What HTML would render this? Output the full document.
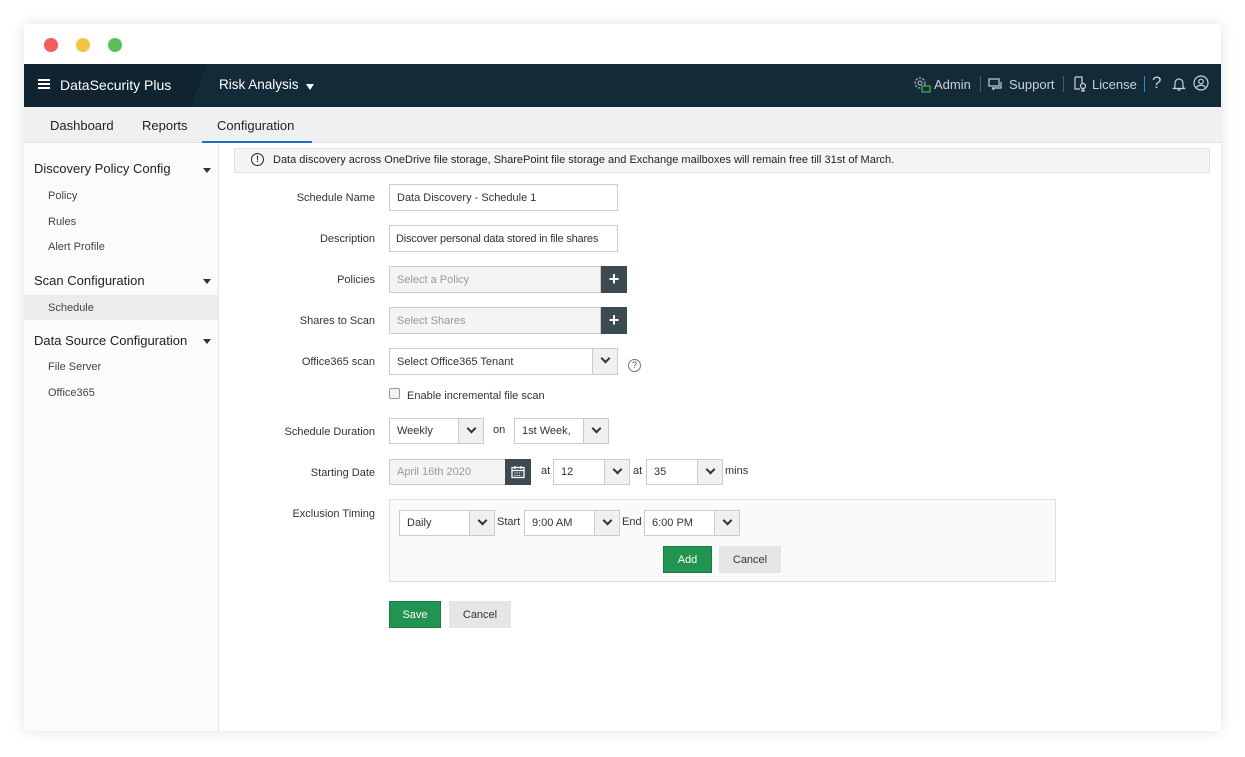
<!DOCTYPE html>
<html><head><style>
*{box-sizing:border-box;margin:0;padding:0}
body{width:1245px;height:757px;background:#fff;font-family:"Liberation Sans",sans-serif;position:relative;overflow:hidden;color:#333}
.a{position:absolute;white-space:nowrap}
.win{left:24px;top:24px;width:1197px;height:707px;background:#fff;box-shadow:0 0 14px rgba(0,0,0,.12);border-radius:3px;overflow:hidden}
.dot{width:14px;height:14px;border-radius:50%;top:38px}
.lbl{font-size:11px;color:#333;text-align:right;width:170px;left:205px}
.in{border:1px solid #ccc;background:#fff;font-size:11px;padding-left:7px;display:flex;align-items:center;color:#333;overflow:hidden}
.ph{background:#f4f4f4;color:#999}
.dd{position:absolute;right:0;top:0;bottom:0;width:25px;background:#f0f0f0;border-left:1px solid #ccc}
.dd:after{content:"";position:absolute;left:9px;top:6px;width:5px;height:5px;border-right:2px solid #333;border-bottom:2px solid #333;transform:rotate(45deg)}
.plus{background:#3c4a52;color:#fff;font-size:18px;font-weight:bold;display:flex;align-items:center;justify-content:center}
.sb{font-size:13.5px;color:#222;left:34px}
.sbi{font-size:11px;color:#444;left:48px}
.car{width:0;height:0;border-left:4px solid transparent;border-right:4px solid transparent;border-top:5px solid #333;left:203px}
.btn{font-size:11px;display:flex;align-items:center;justify-content:center}
.sm{font-size:11px;color:#333}
</style></head><body>
<div class="a win"></div>
<div class="a dot" style="left:44px;background:#f45b5b"></div>
<div class="a dot" style="left:76px;background:#f5c242"></div>
<div class="a dot" style="left:108px;background:#5ac15a"></div>
<!-- header -->
<div class="a" style="left:24px;top:64px;width:1197px;height:43px;background:#0f2330"></div>
<div class="a" style="left:190px;top:64px;width:1031px;height:43px;background:#132a38;clip-path:polygon(17px 0,100% 0,100% 100%,0 100%)"></div>
<div class="a" style="left:38px;top:79px;width:12px;height:2px;background:#fff;box-shadow:0 4px 0 #fff,0 8px 0 #fff"></div>
<div class="a" style="left:60px;top:77px;font-size:14px;color:#fff">DataSecurity Plus</div>
<div class="a" style="left:219px;top:77px;font-size:13.5px;color:#fff">Risk Analysis</div>
<div class="a" style="left:306px;top:84px;border-left:4.5px solid transparent;border-right:4.5px solid transparent;border-top:6px solid #fff"></div>
<svg class="a" style="left:912px;top:75px" width="20" height="20" viewBox="0 0 20 20"><circle cx="8" cy="8" r="5" fill="none" stroke="#9aa5ad" stroke-width="1.3" stroke-dasharray="2.5 1.2"/><circle cx="8" cy="8" r="2" fill="none" stroke="#9aa5ad" stroke-width="1.2"/><rect x="10" y="11" width="8" height="6" fill="#1a2e3a" stroke="#3cb04a" stroke-width="1.3"/></svg>
<div class="a" style="left:934px;top:77px;font-size:13px;color:#c9d1d6">Admin</div>
<div class="a" style="left:980px;top:76px;width:1px;height:16px;background:#4a5a66"></div>
<svg class="a" style="left:988px;top:78px" width="16" height="14" viewBox="0 0 16 14"><rect x="1" y="1" width="10" height="7" fill="none" stroke="#c9d1d6" stroke-width="1.2"/><path d="M4 10h9V4M6 12l-2-2" fill="none" stroke="#c9d1d6" stroke-width="1.2"/></svg>
<div class="a" style="left:1009px;top:77px;font-size:13px;color:#c9d1d6">Support</div>
<div class="a" style="left:1063px;top:76px;width:1px;height:16px;background:#4a5a66"></div>
<svg class="a" style="left:1073px;top:76px" width="14" height="16" viewBox="0 0 14 16"><path d="M2 1h7v7M2 1v12h5" fill="none" stroke="#c9d1d6" stroke-width="1.2"/><circle cx="10" cy="10" r="2.5" fill="none" stroke="#c9d1d6" stroke-width="1.2"/><path d="M9 12.5v3l1-1 1 1v-3" fill="none" stroke="#c9d1d6" stroke-width="1"/></svg>
<div class="a" style="left:1092px;top:77px;font-size:13px;color:#c9d1d6">License</div>
<div class="a" style="left:1144px;top:76px;width:1px;height:16px;background:#2f8ac4"></div>
<div class="a" style="left:1152px;top:73px;font-size:17px;color:#c9d1d6">?</div>
<svg class="a" style="left:1172px;top:76px" width="14" height="16" viewBox="0 0 14 16"><path d="M3 11V7a4 4 0 018 0v4l1.5 1.5h-11z M5.5 14h3" fill="none" stroke="#c9d1d6" stroke-width="1.2"/></svg>
<svg class="a" style="left:1193px;top:75px" width="16" height="16" viewBox="0 0 16 16"><circle cx="8" cy="8" r="7" fill="none" stroke="#c9d1d6" stroke-width="1.2"/><circle cx="8" cy="6.5" r="2.3" fill="none" stroke="#c9d1d6" stroke-width="1.2"/><path d="M3.5 12.5c2-3 7-3 9 0" fill="none" stroke="#c9d1d6" stroke-width="1.2"/></svg>
<!-- tabs -->
<div class="a" style="left:24px;top:107px;width:1197px;height:36px;background:#eef0f2;border-bottom:1px solid #e2e4e6"></div>
<div class="a" style="left:50px;top:118px;font-size:13px;color:#222">Dashboard</div>
<div class="a" style="left:142px;top:118px;font-size:13px;color:#222">Reports</div>
<div class="a" style="left:217px;top:118px;font-size:13px;color:#222">Configuration</div>
<div class="a" style="left:202px;top:141px;width:110px;height:2px;background:#1e6fc4"></div>
<!-- sidebar -->
<div class="a" style="left:24px;top:144px;width:195px;height:587px;background:#fbfbfb;border-right:1px solid #e6e6e6"></div>
<div class="a sb" style="top:161px;font-size:13px">Discovery Policy Config</div><div class="a car" style="top:168px"></div>
<div class="a sbi" style="top:190px">Policy</div>
<div class="a sbi" style="top:216px">Rules</div>
<div class="a sbi" style="top:241px">Alert Profile</div>
<div class="a sb" style="top:273px;font-size:13px">Scan Configuration</div><div class="a car" style="top:279px"></div>
<div class="a" style="left:24px;top:295px;width:194px;height:25px;background:#ececec"></div>
<div class="a sbi" style="top:302px">Schedule</div>
<div class="a sb" style="top:333px;font-size:13px">Data Source Configuration</div><div class="a car" style="top:339px"></div>
<div class="a sbi" style="top:361px">File Server</div>
<div class="a sbi" style="top:387px">Office365</div>
<!-- banner -->
<div class="a" style="left:234px;top:148px;width:976px;height:25px;background:#f3f5f6;border:1px solid #e0e3e5"></div>
<div class="a" style="left:251px;top:153px;width:13px;height:13px;border:1.3px solid #222;border-radius:50%;font-size:9px;font-weight:bold;text-align:center;line-height:11px">!</div>
<div class="a" style="left:273px;top:154px;font-size:11px;color:#222">Data discovery across OneDrive file storage, SharePoint file storage and Exchange mailboxes will remain free till 31st of March.</div>
<!-- form -->
<div class="a lbl" style="top:192px">Schedule Name</div>
<div class="a in" style="left:389px;top:184px;width:229px;height:27px">Data Discovery - Schedule 1</div>
<div class="a lbl" style="top:233px">Description</div>
<div class="a in" style="left:389px;top:225px;width:229px;height:27px;letter-spacing:-0.2px;padding-left:6px">Discover personal data stored in file shares</div>
<div class="a lbl" style="top:274px">Policies</div>
<div class="a in ph" style="left:389px;top:266px;width:212px;height:27px">Select a Policy</div>
<div class="a plus" style="left:601px;top:266px;width:26px;height:27px">+</div>
<div class="a lbl" style="top:315px">Shares to Scan</div>
<div class="a in ph" style="left:389px;top:307px;width:212px;height:27px">Select Shares</div>
<div class="a plus" style="left:601px;top:307px;width:26px;height:27px">+</div>
<div class="a lbl" style="top:356px">Office365 scan</div>
<div class="a in" style="left:389px;top:348px;width:229px;height:27px">Select Office365 Tenant<span class="dd"></span></div>
<div class="a" style="left:628px;top:359px;width:13px;height:13px;border:1px solid #777;border-radius:50%;font-size:9px;color:#555;text-align:center;line-height:11px">?</div>
<div class="a" style="left:389px;top:388px;width:11px;height:11px;border:1px solid #999;border-radius:2px;background:#f4f4f4"></div>
<div class="a sm" style="left:407px;top:390px">Enable incremental file scan</div>
<div class="a lbl" style="top:426px">Schedule Duration</div>
<div class="a in" style="left:389px;top:418px;width:95px;height:26px">Weekly<span class="dd"></span></div>
<div class="a sm" style="left:493px;top:424px">on</div>
<div class="a in" style="left:514px;top:418px;width:95px;height:26px">1st Week,<span class="dd"></span></div>
<div class="a lbl" style="top:467px">Starting Date</div>
<div class="a in ph" style="left:389px;top:459px;width:117px;height:26px">April 16th 2020</div>
<div class="a" style="left:505px;top:459px;width:26px;height:26px;background:#3c4a52"></div>
<svg class="a" style="left:511px;top:465px" width="14" height="14" viewBox="0 0 14 14"><rect x="1" y="2.5" width="12" height="10" fill="none" stroke="#fff" stroke-width="1.3"/><path d="M1 5.5h12M4 1v3M10 1v3" stroke="#fff" stroke-width="1.3"/><path d="M3.5 8h7M3.5 10.5h7" stroke="#fff" stroke-width="1" stroke-dasharray="1.2 1"/></svg>
<div class="a sm" style="left:541px;top:465px">at</div>
<div class="a in" style="left:553px;top:459px;width:77px;height:26px">12<span class="dd"></span></div>
<div class="a sm" style="left:633px;top:465px">at</div>
<div class="a in" style="left:646px;top:459px;width:77px;height:26px">35<span class="dd"></span></div>
<div class="a sm" style="left:725px;top:465px">mins</div>
<div class="a lbl" style="top:508px">Exclusion Timing</div>
<div class="a" style="left:389px;top:499px;width:667px;height:83px;border:1px solid #ddd;background:#fafafa"></div>
<div class="a in" style="left:399px;top:510px;width:96px;height:26px">Daily<span class="dd"></span></div>
<div class="a sm" style="left:497px;top:516px">Start</div>
<div class="a in" style="left:524px;top:510px;width:96px;height:26px">9:00 AM<span class="dd"></span></div>
<div class="a sm" style="left:622px;top:516px">End</div>
<div class="a in" style="left:644px;top:510px;width:96px;height:26px">6:00 PM<span class="dd"></span></div>
<div class="a btn" style="left:663px;top:546px;width:49px;height:27px;background:#229452;color:#fff;border:1px solid #1b7d44">Add</div>
<div class="a btn" style="left:719px;top:546px;width:62px;height:27px;background:#e6e6e6;color:#333">Cancel</div>
<div class="a btn" style="left:389px;top:601px;width:52px;height:27px;background:#229452;color:#fff;border:1px solid #1b7d44">Save</div>
<div class="a btn" style="left:449px;top:601px;width:62px;height:27px;background:#e6e6e6;color:#333">Cancel</div>
</body></html>
